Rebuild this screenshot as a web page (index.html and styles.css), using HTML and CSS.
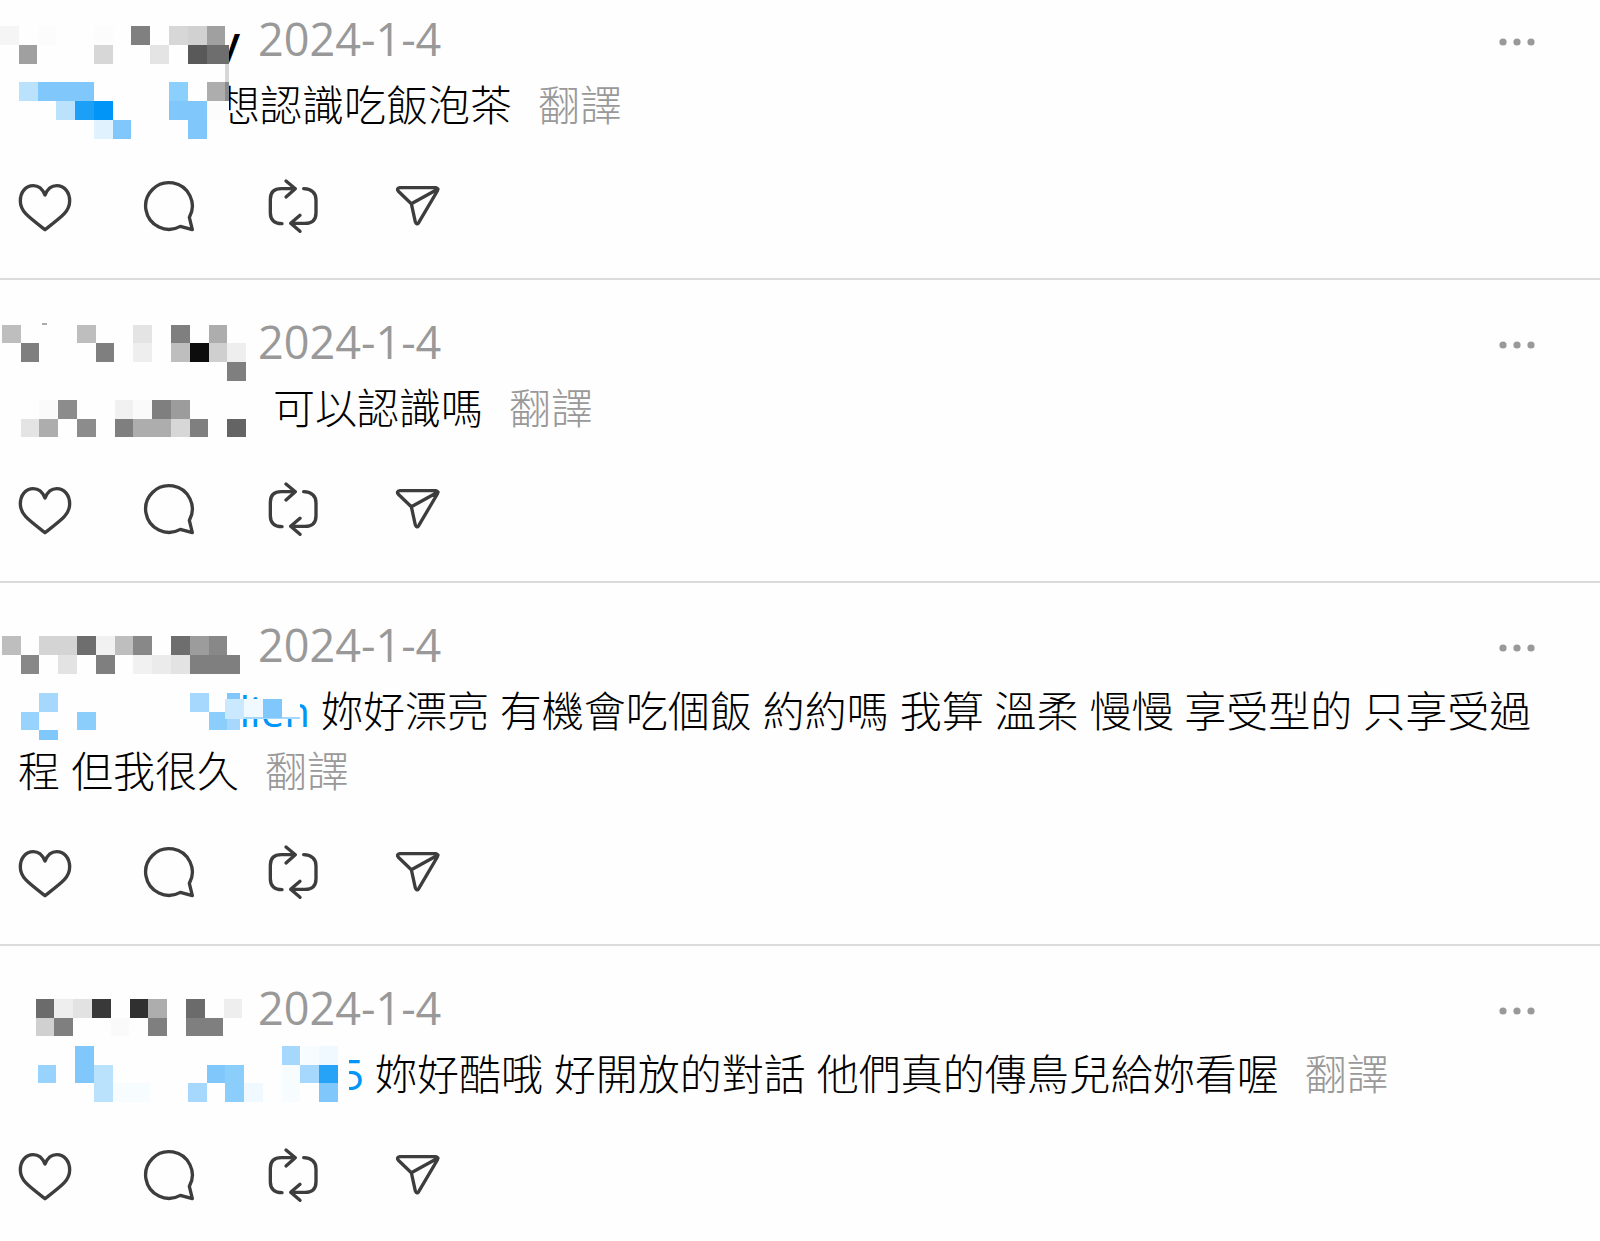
FILE: index.html
```html
<!DOCTYPE html>
<html lang="zh-Hant">
<head>
    <meta charset="UTF-8">
    <meta name="viewport" content="width=device-width, initial-scale=1.0">
    <title>Replies</title>
    <link rel="stylesheet" href="styles.css">
</head>
<body>
    <!-- Shared icons -->
    <svg class="sprite" aria-hidden="true">
        <symbol id="heart" viewBox="54 48 162 180">
            <path d="M135 105C128 88 116 77 100 77C76 77 61 97 61 123C61 154 84 170 135 209C186 170 209 154 209 123C209 97 194 77 170 77C154 77 142 88 135 105Z"/>
        </symbol>
        <symbol id="comment" viewBox="426 48 162 180">
            <path d="M568 172A70 70 0 1 0 541 199L577 209Z"/>
        </symbol>
        <symbol id="repost" viewBox="798 48 162 180">
            <path d="M886 86H844Q811 86 811 118V158Q811 190 846 191M858 63L886 86L858 111M911 86Q948 88 948 120V158Q948 190 915 190H872M900 166L872 190L900 214"/>
        </symbol>
        <symbol id="send" viewBox="1170 48 162 180">
            <path d="M1200 83H1307Q1316 85 1312 93L1256 188Q1250 196 1246 186L1234 131L1195 94Q1188 85 1200 83ZM1234 131L1314 87"/>
        </symbol>
        <symbol id="dots" viewBox="0 0 42 60">
            <circle cx="5" cy="31" r="3.6"/>
            <circle cx="19" cy="31" r="3.6"/>
            <circle cx="33" cy="31" r="3.6"/>
        </symbol>
    </svg>

    <main class="thread">
        <article class="post">
            <header class="post-header">
                <span class="name">y</span>
                <time datetime="2024-01-04">2024-1-4</time>
                <button class="more" aria-label="更多"><svg><use href="#dots"/></svg></button>
            </header>
            <p class="text"><a href="#" class="mention mention-short" aria-label="提及"></a>想認識吃飯泡茶<button class="translate">翻譯</button></p>
            <svg class="mosaic" viewBox="0 33 1200 450" aria-hidden="true">
                <path fill="#fefefe" d="M0 60H687V420H0z"/>
                <path fill="#f5f5f5" d="M0 79h56v56H0z"/>
                <path fill="#fcfcfc" d="M113 79h56v56h-56zM282 79h56v56h-56zM620 304h56v56h-56z"/>
                <path fill="#a0a0a0" d="M56 135h56v56H56zM620 79h56v56h-56z"/>
                <path fill="#d7d7d7" d="M282 135h56v56h-56zM507 79h56v56h-56zM676 191h11v56h-11z"/>
                <path fill="#808080" d="M394 79h56v56h-56z"/>
                <path fill="#e4e4e4" d="M451 135h56v56h-56z"/>
                <path fill="#d1d1d1" d="M563 79h57v56h-57z"/>
                <path fill="#595959" d="M563 135h57v56h-57z"/>
                <path fill="#6e6e6e" d="M620 135h67v56h-67z"/>
                <path fill="#adadad" d="M620 247h56v56h-56z"/>
                <path fill="#8c8c8c" d="M676 247h11v56h-11z"/>
                <path fill="#bae2fc" d="M56 247h57v56H56zM169 304h56v56h-56z"/>
                <path fill="#80c8fb" d="M113 247h169v57H113zM338 360h56v56h-56zM507 304h113v112h-57v-56h-56z"/>
                <path fill="#8bcffd" d="M507 247h56v57h-56z"/>
                <path fill="#1b9ff7" d="M225 304h57v56h-57z"/>
                <path fill="#0095f6" d="M282 304h56v56h-56z"/>
                <path fill="#e0f2fe" d="M282 360h56v56h-56z"/>
            </svg>
            <div class="actions">
                <button aria-label="讚"><svg><use href="#heart"/></svg></button>
                <button aria-label="回覆"><svg><use href="#comment"/></svg></button>
                <button aria-label="轉發"><svg><use href="#repost"/></svg></button>
                <button aria-label="分享"><svg><use href="#send"/></svg></button>
            </div>
        </article>

        <article class="post">
            <header class="post-header">
                <span class="name"></span>
                <time datetime="2024-01-04">2024-1-4</time>
                <button class="more" aria-label="更多"><svg><use href="#dots"/></svg></button>
            </header>
            <p class="text"><a href="#" class="mention mention-medium" aria-label="提及"></a>可以認識嗎<button class="translate">翻譯</button></p>
            <svg class="mosaic" viewBox="0 12 1200 450" aria-hidden="true">
                <path fill="#aaa" d="M126 39h14v5h-14z"/>
                <path fill="#bebebe" d="M6 44h56v56H6zM231 44h56v56h-56zM513 100h56v56h-56z"/>
                <path fill="#7f7f7f" d="M62 100h56v56H62zM287 100h56v56h-56zM513 44h56v56h-56zM682 156h56v57h-56zM457 269h56v57h-56zM344 326h56v56h-56zM569 326h56v56h-56z"/>
                <path fill="#e4e4e4" d="M400 44h56v56h-56zM62 326h56v56H62z"/>
                <path fill="#eee" d="M400 100h56v56h-56zM682 100h56v56h-56z"/>
                <path fill="#adadad" d="M626 44h56v56h-56zM118 326h56v56h-56zM400 326h113v56H400z"/>
                <path fill="#0d0d0d" d="M569 100h57v56h-57z"/>
                <path fill="#cfcfcf" d="M626 100h56v56h-56z"/>
                <path fill="#fafafa" d="M118 269h57v57h-57zM400 269h57v57h-57z"/>
                <path fill="#f1f1f1" d="M344 269h56v57h-56z"/>
                <path fill="#8c8c8c" d="M175 269h56v57h-56zM231 326h56v56h-56z"/>
                <path fill="#9c9c9c" d="M513 269h56v57h-56z"/>
                <path fill="#d7d7d7" d="M513 326h56v56h-56z"/>
                <path fill="#646464" d="M682 326h56v56h-56z"/>
            </svg>
            <div class="actions">
                <button aria-label="讚"><svg><use href="#heart"/></svg></button>
                <button aria-label="回覆"><svg><use href="#comment"/></svg></button>
                <button aria-label="轉發"><svg><use href="#repost"/></svg></button>
                <button aria-label="分享"><svg><use href="#send"/></svg></button>
            </div>
        </article>

        <article class="post">
            <header class="post-header">
                <span class="name"></span>
                <time datetime="2024-01-04">2024-1-4</time>
                <button class="more" aria-label="更多"><svg><use href="#dots"/></svg></button>
            </header>
            <p class="text"><a href="#" class="mention mention-long">lien</a> 妳好漂亮 有機會吃個飯 約約嗎 我算 溫柔 慢慢 享受型的 只享受過程 但我很久<button class="translate">翻譯</button></p>
            <svg class="mosaic" viewBox="0 -9 1200 450" aria-hidden="true">
                <path fill="#fefefe" d="M620 200H720V340H620zM720 236H900V297H720z"/>
                <path fill="#bebebe" d="M6 49h56v56H6zM344 49h56v56h-56z"/>
                <path fill="#888" d="M62 105h56v57H62zM400 49h56v56h-56zM626 49h55v56h-55z"/>
                <path fill="#d4d4d4" d="M118 49h113v56H118z"/>
                <path fill="#6e6e6e" d="M231 49h56v56h-56zM513 49h56v56h-56z"/>
                <path fill="#f1f1f1" d="M287 49h57v56h-57zM400 105h56v57h-56z"/>
                <path fill="#e3e3e3" d="M175 105h56v57h-56zM513 105h56v57h-56z"/>
                <path fill="#ebebeb" d="M456 105h57v57h-57z"/>
                <path fill="#7f7f7f" d="M287 105h57v57h-57zM569 105h152v57H569z"/>
                <path fill="#9c9c9c" d="M569 49h57v56h-57z"/>
                <path fill="#a6d8fd" d="M118 218h57v57h-57zM569 218h57v57h-57zM682 275h39v56h-39zM720 291h180v6H720z"/>
                <path fill="#98d3fd" d="M62 275h56v56H62z"/>
                <path fill="#8bcdfb" d="M231 275h56v56h-56zM626 275h56v56h-56z"/>
                <path fill="#80c8fb" d="M118 331h57v28h-57zM682 218h39v18h-39zM788 236h57v57h-57z"/>
                <path fill="#cbe9fe" d="M676 236h56v60h-56z"/>
                <path fill="#f0f9ff" d="M732 236h56v55h-56z"/>
            </svg>
            <div class="actions">
                <button aria-label="讚"><svg><use href="#heart"/></svg></button>
                <button aria-label="回覆"><svg><use href="#comment"/></svg></button>
                <button aria-label="轉發"><svg><use href="#repost"/></svg></button>
                <button aria-label="分享"><svg><use href="#send"/></svg></button>
            </div>
        </article>

        <article class="post">
            <header class="post-header">
                <span class="name"></span>
                <time datetime="2024-01-04">2024-1-4</time>
                <button class="more" aria-label="更多"><svg><use href="#dots"/></svg></button>
            </header>
            <p class="text"><a href="#" class="mention mention-full">5</a> 妳好酷哦 好開放的對話 他們真的傳鳥兒給妳看喔<button class="translate">翻譯</button></p>
            <svg class="mosaic" viewBox="0 0 1200 450" aria-hidden="true">
                <path fill="#fefefe" d="M1000 200H1046V360H1000z"/>
                <path fill="#6b6b6b" d="M107 57h56v56h-56zM558 57h56v56h-56z"/>
                <path fill="#eee" d="M163 57h57v56h-57zM671 57h56v56h-56z"/>
                <path fill="#e2e2e2" d="M220 57h56v56h-56z"/>
                <path fill="#393939" d="M276 57h56v56h-56z"/>
                <path fill="#303030" d="M389 57h56v56h-56z"/>
                <path fill="#adadad" d="M445 57h56v56h-56z"/>
                <path fill="#d0d0d0" d="M107 113h56v56h-56z"/>
                <path fill="#7f7f7f" d="M163 113h57v56h-57zM445 113h56v56h-56zM558 113h112v56H558z"/>
                <path fill="#fafafa" d="M332 113h56v56h-56z"/>
                <path fill="#98d3fd" d="M113 254h56v56h-56z"/>
                <path fill="#80c8fb" d="M225 197h57v113h-57zM620 254h56v56h-56zM957 310h57v56h-57z"/>
                <path fill="#bae2fc" d="M282 254h56v112h-56z"/>
                <path fill="#f7fcff" d="M338 310h113v56H338zM902 197h55v57h-55zM845 254h56v112h-56z"/>
                <path fill="#a6d8fd" d="M563 310h57v56h-57zM845 197h56v57h-56zM901 254h56v56h-56z"/>
                <path fill="#8bcdfb" d="M676 254h57v112h-57z"/>
                <path fill="#f0f9ff" d="M733 310h56v56h-56zM957 197h57v57h-57z"/>
                <path fill="#26a3f7" d="M957 254h57v56h-57z"/>
            </svg>
            <div class="actions">
                <button aria-label="讚"><svg><use href="#heart"/></svg></button>
                <button aria-label="回覆"><svg><use href="#comment"/></svg></button>
                <button aria-label="轉發"><svg><use href="#repost"/></svg></button>
                <button aria-label="分享"><svg><use href="#send"/></svg></button>
            </div>
        </article>
    </main>
</body>
</html>
```
FILE: styles.css
```css
* {
    margin: 0;
    padding: 0;
    box-sizing: border-box;
}

body {
    background-color: #fefefe;
    color: #000;
    font-family: 'Open Sans', 'Noto Sans CJK TC', sans-serif;
    font-size: 42px;
    font-weight: 300;
    line-height: 60px;
}

button {
    border: none;
    background: none;
    color: inherit;
    font: inherit;
    cursor: pointer;
}

.sprite {
    display: block;
    width: 0;
    height: 0;
}

.post {
    position: relative;
    padding: 34px 60px 42px 18px;
    border-bottom: 2px solid #dbdbdb;
}

.post:first-child {
    padding-top: 11px;
}

.post:last-child {
    border-bottom: none;
}

.post-header {
    display: flex;
    align-items: center;
    gap: 18px;
    height: 60px;
    margin-bottom: 4px;
}

.name {
    width: 222px;
    text-align: right;
    font-weight: 600;
}

time {
    color: #999;
    font-size: 45px;
    font-weight: 400;
    line-height: 56px;
    padding-bottom: 4px;
}

.more {
    width: 42px;
    height: 60px;
    margin-left: auto;
}

.more svg {
    display: block;
    width: 42px;
    height: 60px;
    fill: #999;
}

.text {
    min-height: 60px;
}

.mention {
    display: inline-block;
    height: 60px;
    vertical-align: top;
    text-align: right;
    text-decoration: none;
    font-weight: 400;
    color: #0095f6;
}

.mention-short {
    width: 200px;
}

.mention-medium {
    width: 255px;
}

.mention-long {
    width: 292px;
}

.mention-full {
    width: 346px;
}

.translate {
    margin-left: 26px;
    color: #999;
}

/* Pixelated cover over the account names */
.mosaic {
    position: absolute;
    top: 34px;
    left: 0;
    width: 400px;
    height: 150px;
    shape-rendering: crispEdges;
    pointer-events: none;
}

.post:first-child .mosaic {
    top: 11px;
}

.actions {
    display: flex;
    gap: 70px;
    margin-top: 41px;
}

.actions button,
.actions svg {
    display: block;
    width: 54px;
    height: 60px;
}

.actions svg {
    fill: none;
    stroke: #3d3d3d;
    stroke-width: 10;
    stroke-linecap: round;
    stroke-linejoin: round;
}
```
